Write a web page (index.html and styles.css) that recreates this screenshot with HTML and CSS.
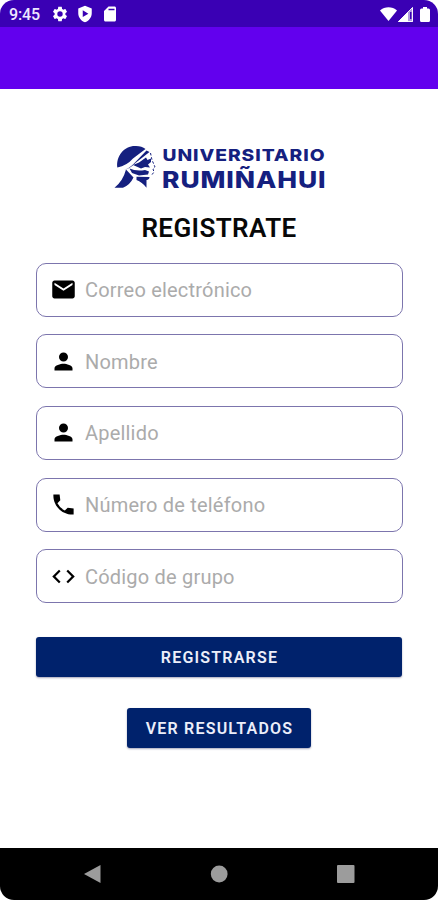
FILE: index.html
```html
<!DOCTYPE html>
<html lang="es">
<head>
<meta charset="utf-8">
<title>Registrate</title>
<link rel="stylesheet" href="styles.css">
</head>
<body>
<div class="phone">
  <header class="status">
    <span class="clock">9:45</span>
    <svg class="s-gear" viewBox="0 0 24 24"><path fill-rule="evenodd" d="M19.14 12.94c.04-.3.06-.61.06-.94s-.02-.64-.07-.94l2.03-1.58c.18-.14.23-.41.12-.61l-1.92-3.32c-.12-.22-.37-.29-.59-.22l-2.39.96c-.5-.38-1.03-.7-1.62-.94l-.36-2.54c-.04-.24-.24-.41-.48-.41h-3.84c-.24 0-.43.17-.47.41l-.36 2.54c-.59.24-1.13.57-1.62.94l-2.39-.96c-.22-.08-.47 0-.59.22L2.74 8.87c-.12.21-.08.47.12.61l2.03 1.58c-.05.3-.09.63-.09.94s.02.64.07.94l-2.03 1.58c-.18.14-.23.41-.12.61l1.92 3.32c.12.22.37.29.59.22l2.39-.96c.5.38 1.03.7 1.62.94l.36 2.54c.05.24.24.41.48.41h3.84c.24 0 .44-.17.47-.41l.36-2.54c.59-.24 1.13-.56 1.62-.94l2.39.96c.22.08.47 0 .59-.22l1.92-3.32c.12-.22.07-.47-.12-.61zM12 15.6A3.6 3.6 0 1 1 12 8.4a3.6 3.6 0 0 1 0 7.2z"/></svg>
    <svg class="s-shield" viewBox="0 0 24 24"><path fill-rule="evenodd" d="M12 1 3 4.6V11c0 5.5 3.8 10.4 9 12 5.200-1.600 9-6.500 9-12V4.600zM9 7v9l7.500-4.500z"/></svg>
    <svg class="s-card" viewBox="0 0 24 24"><path fill-rule="evenodd" d="M18 2h-8L4 8v12c0 1.100.9 2 2 2h12c1.100 0 2-.9 2-2V4c0-1.100-.9-2-2-2zM10 5h8v2h-8z"/></svg>
    <span class="spacer"></span>
    <svg class="s-wifi" viewBox="0 0 17 14"><path d="M0 3.500C4.800-.7 12.200-.7 17 3.500L8.500 14z"/></svg>
    <svg class="s-cell" viewBox="0 0 15 15"><path opacity=".6" d="M0 15 15 0v15z"/><path d="M0 15 10 5v10z"/><path d="M14.500.5v14H.5z" fill="none" stroke="#fff" stroke-width=".9"/><path d="M12 5h1.500v7H12z" fill="#3a00b4"/></svg>
    <svg class="s-batt" viewBox="0 0 10 15"><path d="M3 0h4v1.500h1.500Q10 1.500 10 3v10.500Q10 15 8.500 15h-7Q0 15 0 13.500V3Q0 1.500 1.500 1.500H3z"/></svg>
  </header>
  <div class="appbar"></div>
  <main class="content">
    <svg class="logo" viewBox="0 0 214 50">
      <g class="mark">
        <path d="M4.300 23.500C3 12 11 2 22 2q6.500-.3 10.500 3L20 14.500q-6 7-15.700 9z"/>
        <path d="M33.500 6.500 36.500 8 23 18.500q-7 7-12.500 7.500 5-1 10-6z"/>
        <path d="M13 25.500 20.500 33.500Q17 41 10 43.700H1.500Q10 37 13 25.500z"/>
        <path d="M26 18.500 33 13.500 34.500 16 38 14.500 38 18 35 20.500 37 23.500 32 23 28 24.500 20 21z"/>
        <path d="M16.500 24.500Q23 27.500 32 26L36 27.500 35 30.500 26 31.500 19 29z"/>
        <path d="M23.500 32.800 36.500 33Q36.500 35.500 33.500 36V43.700Q29 38 23.500 36z"/>
        <path d="M37.500 9 39 16 42 23 40 25 41 28 38 32" fill="none" stroke="#15207f" stroke-width="1" stroke-dasharray="2.500 1.800"/>
      </g>
      <text class="word-top" x="49.500" y="17" textLength="163" lengthAdjust="spacingAndGlyphs">UNIVERSITARIO</text>
      <text class="word-bottom" x="49" y="43.700" textLength="164.500" lengthAdjust="spacingAndGlyphs">RUMIÑAHUI</text>
    </svg>
    <h1 class="title">REGISTRATE</h1>
    <form class="form">
      <label class="field"><svg viewBox="0 0 24 24"><path d="M20 4H4c-1.100 0-2 .9-2 2v12c0 1.100.9 2 2 2h16c1.100 0 2-.9 2-2V6c0-1.100-.9-2-2-2zm0 4-8 5-8-5V6l8 5 8-5z"/></svg><span class="hint">Correo electrónico</span></label>
      <label class="field"><svg viewBox="0 0 24 24"><path d="M12 12a4 4 0 1 0 0-8 4 4 0 0 0 0 8zm0 2c-2.670 0-8 1.340-8 4v2h16v-2c0-2.660-5.330-4-8-4z"/></svg><span class="hint">Nombre</span></label>
      <label class="field"><svg viewBox="0 0 24 24"><path d="M12 12a4 4 0 1 0 0-8 4 4 0 0 0 0 8zm0 2c-2.670 0-8 1.340-8 4v2h16v-2c0-2.660-5.330-4-8-4z"/></svg><span class="hint">Apellido</span></label>
      <label class="field"><svg viewBox="0 0 24 24"><path d="M21 15.460l-5.270-.61-2.520 2.520a15.050 15.050 0 0 1-6.590-6.590l2.530-2.530L8.540 3H3.030C2.450 13.180 10.820 21.550 21 20.970z"/></svg><span class="hint">Número de teléfono</span></label>
      <label class="field"><svg viewBox="0 0 24 24"><path d="M9.400 16.600 4.800 12l4.600-4.600L8 6l-6 6 6 6zm5.200 0 4.600-4.600-4.600-4.600L16 6l6 6-6 6z"/></svg><span class="hint">Código de grupo</span></label>
    </form>
    <button class="btn btn-wide">REGISTRARSE</button>
    <button class="btn btn-small">VER RESULTADOS</button>
  </main>
  <nav class="navbar">
    <svg class="nav-icon" viewBox="0 0 18 18"><path d="M0 9 16.500 0v18z"/></svg>
    <svg class="nav-icon" viewBox="0 0 18 18"><circle cx="9.200" cy="9" r="8.400"/></svg>
    <svg class="nav-icon" viewBox="0 0 18 18"><rect width="17.500" height="18" rx="1"/></svg>
  </nav>
</div>
</body>
</html>
```
FILE: styles.css
```css
* { box-sizing: border-box; }
body { margin: 0; background: #fff; font-family: Roboto, "Liberation Sans", sans-serif; }
.phone { width: 438px; height: 900px; display: flex; flex-direction: column; overflow: hidden; border-radius: 14px; background: #fff; }
svg { display: block; flex: none; }

.status { height: 27px; display: flex; align-items: center; background: #3a00b4; padding: 1px 8px 0 9px; }
.status svg { fill: #fff; }
.clock { width: 42px; color: #eee8ff; font-size: 16px; line-height: 27px; font-weight: 500; letter-spacing: -.1px; }
.s-gear, .s-shield, .s-card { width: 18px; height: 18px; }
.s-shield { margin-left: 7px; }
.s-card { margin-left: 6.500px; }
.spacer { flex: 1; }
.s-wifi { width: 17px; height: 14px; }
.s-cell { width: 15px; height: 15px; margin-left: 1px; }
.s-batt { width: 10px; height: 15px; margin-left: 7px; }

.appbar { height: 62px; background: #6200ee; }

.content { flex: 1; display: flex; flex-direction: column; align-items: center; padding: 0 35.500px; }
.logo { width: 214px; height: 50px; margin-top: 55px; margin-left: 2px; }
.mark { fill: #15207f; }
.logo text { font-family: Inter, sans-serif; font-weight: 800; fill: #15207f; letter-spacing: .8px; }
.word-top { font-size: 16.500px; }
.word-bottom { font-size: 22.800px; }

.title { margin: 18px 0 0; font-size: 26px; line-height: 32px; font-weight: 600; letter-spacing: .4px; color: #080808; }
.form { align-self: stretch; display: grid; gap: 17.700px; margin-top: 18.500px; }
.field { height: 54px; display: flex; align-items: center; border: 1px solid #7c75ad; border-radius: 10px; padding-left: 13px; }
.field svg { width: 27px; height: 27px; fill: #000; }
.hint { margin-left: 8.500px; padding-top: 1px; font-size: 20px; line-height: 28px; font-weight: 400; letter-spacing: .2px; color: #ababab; }

.btn { border: 0; border-radius: 3px; background: #00226c; color: #eceefa; font-family: inherit; font-size: 16px; font-weight: 600; letter-spacing: 1.200px; padding: 1px 0 0 1px; height: 40px; box-shadow: 0 1px 2px rgba(0, 0, 60, .35); }
.btn-wide { align-self: stretch; margin: 34px .5px 0; }
.btn-small { width: 184px; margin-top: 31px; }

.navbar { height: 52.500px; display: flex; align-items: center; justify-content: space-between; background: #000; padding: 0 83.500px; }
.nav-icon { width: 18px; height: 18px; fill: #9c9c9c; }
```
